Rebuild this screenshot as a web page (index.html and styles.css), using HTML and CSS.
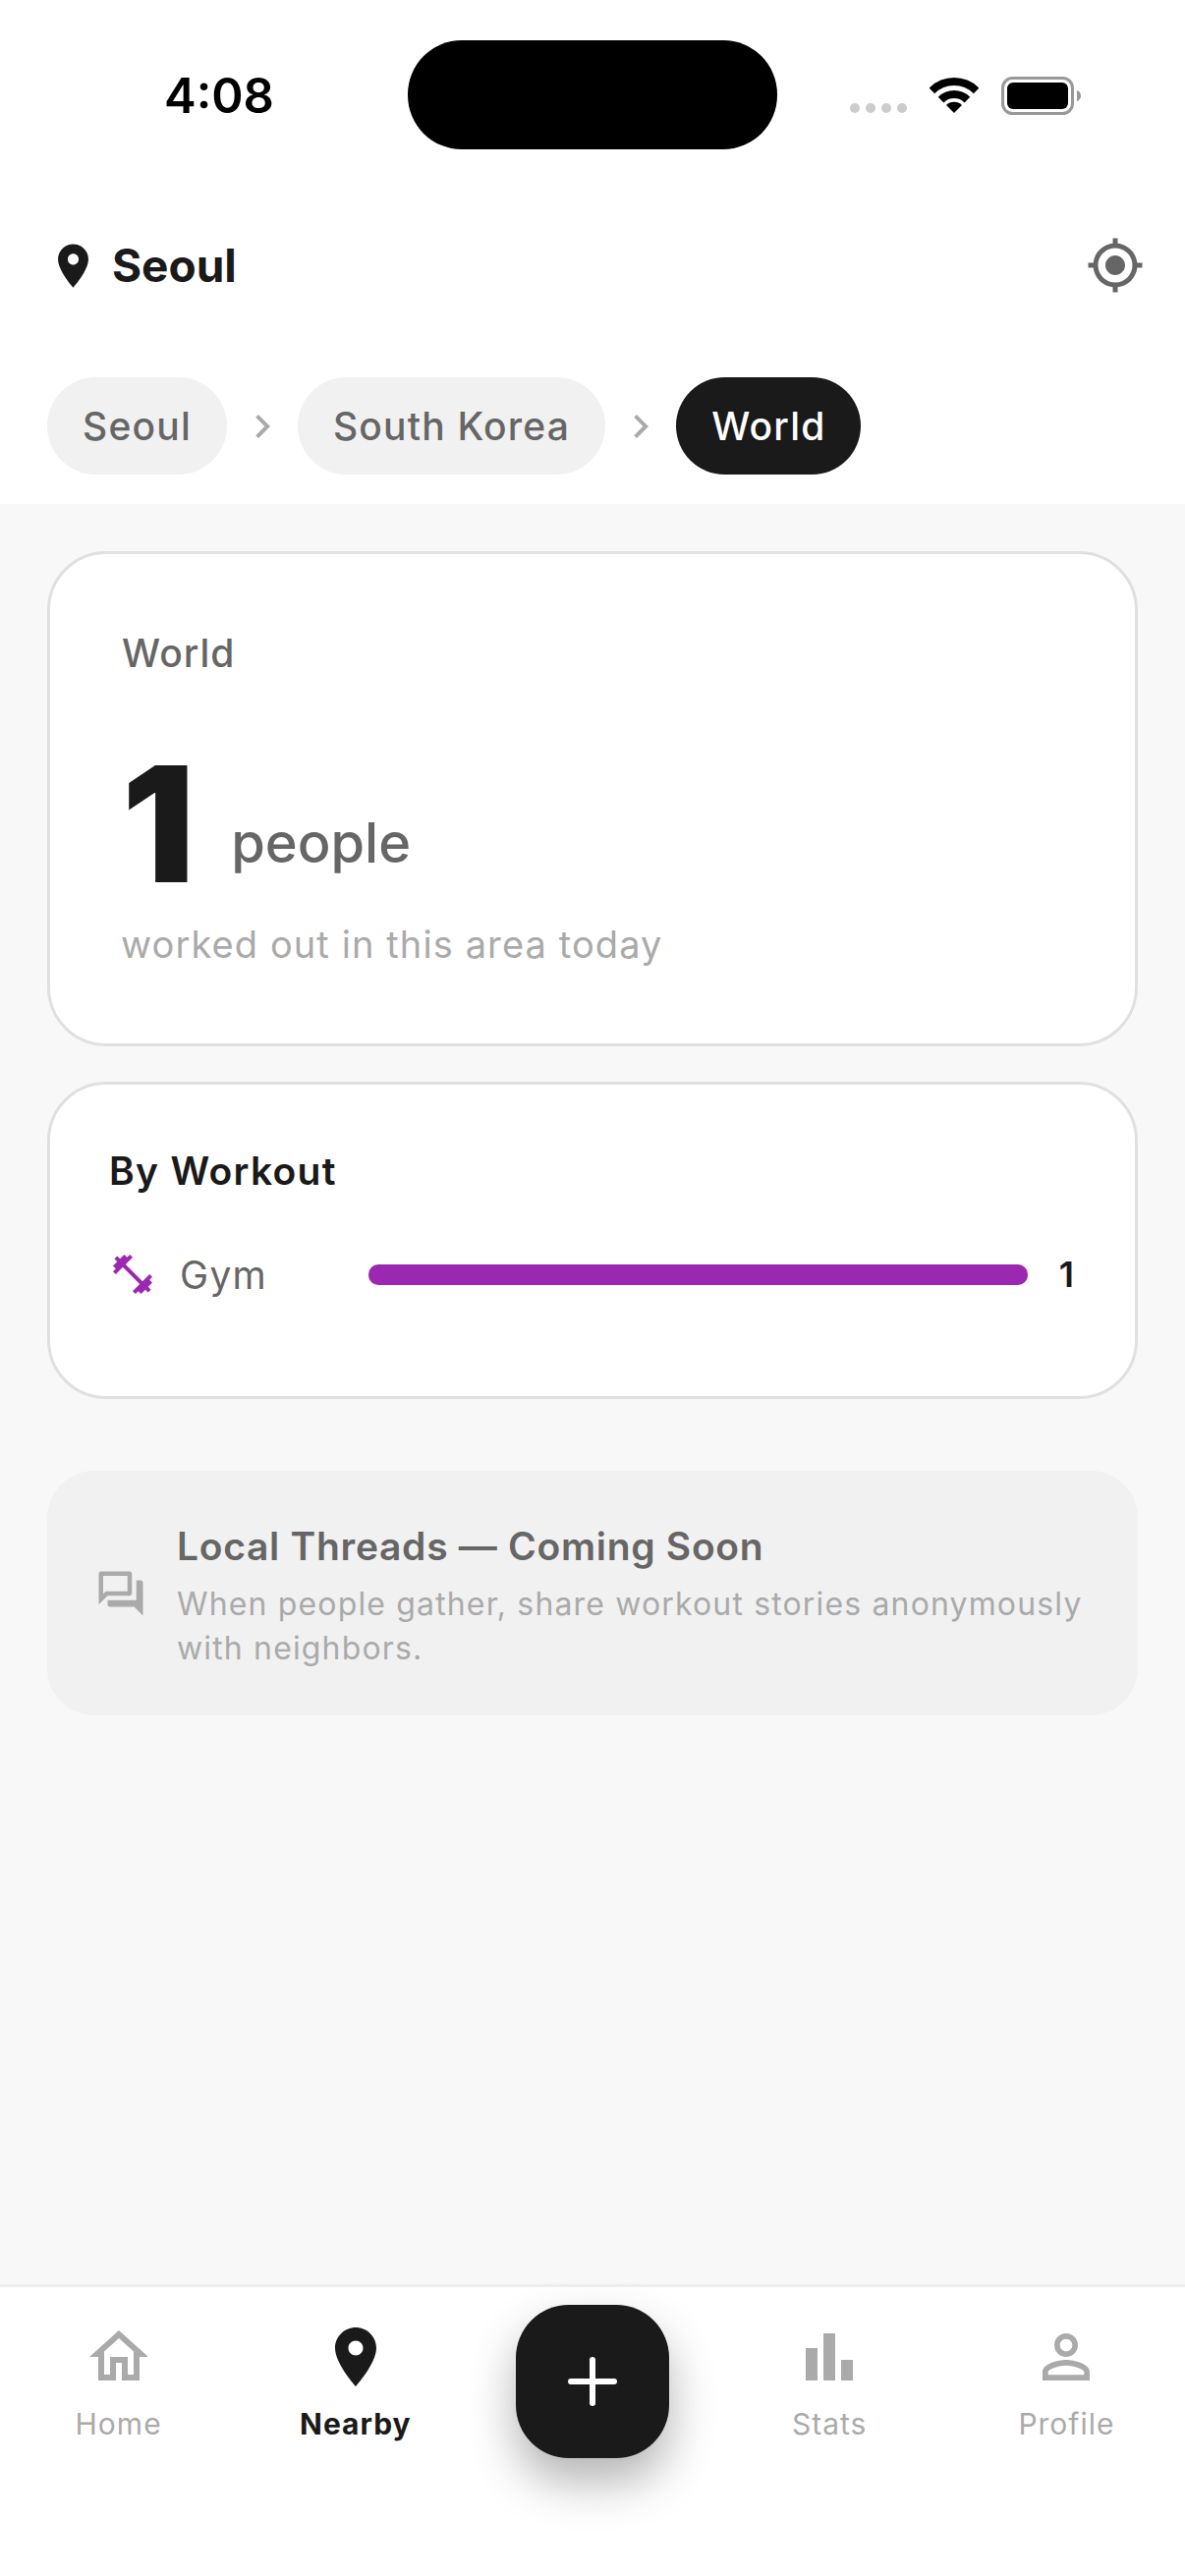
FILE: index.html
```html
<!DOCTYPE html>
<html lang="en">
<head>
    <meta charset="UTF-8">
    <meta name="viewport" content="width=device-width, initial-scale=1.0">
    <title>Nearby</title>
    <link rel="stylesheet" href="styles.css">
</head>
<body>
    <div class="app">
        <div class="top">
            <div class="status-bar">
                <span class="time">4:08</span>
                <div class="island"></div>
                <div class="signal-dots"><i></i><i></i><i></i><i></i></div>
                <svg class="wifi" viewBox="0 0 50 37">
                    <path d="M2.4 14.4A32 32 0 0 1 47.6 14.4" fill="none" stroke="#000" stroke-width="8"/>
                    <path d="M11.6 23.6A19 19 0 0 1 38.4 23.6" fill="none" stroke="#000" stroke-width="8"/>
                    <path d="M25 37L17 29A11.3 11.3 0 0 1 33 29Z"/>
                </svg>
                <svg class="battery" viewBox="0 0 82 39">
                    <rect x="1.5" y="1.5" width="71" height="36" rx="10" fill="none" stroke="#999" stroke-width="3"/>
                    <rect x="6" y="6" width="62" height="27" rx="6"/>
                    <path d="M77 14c2.5.8 4 3 4 5.500s-1.500 4.700-4 5.500z" fill="#999"/>
                </svg>
            </div>
            <div class="location-row">
                <div class="location">
                    <svg class="location-pin" viewBox="0 0 24 24"><path d="M12 2C8.130 2 5 5.130 5 9c0 5.250 7 13 7 13s7-7.750 7-13c0-3.870-3.130-7-7-7zm0 9.500c-1.380 0-2.500-1.120-2.500-2.500s1.120-2.500 2.500-2.500 2.500 1.120 2.500 2.500-1.120 2.500-2.500 2.500z"/></svg>
                    <span class="location-name">Seoul</span>
                </div>
                <svg class="gps" viewBox="0 0 24 24"><path d="M12 8c-2.210 0-4 1.790-4 4s1.790 4 4 4 4-1.790 4-4-1.790-4-4-4zm8.940 3c-.46-4.170-3.770-7.480-7.940-7.940V1h-2v2.060C6.830 3.520 3.520 6.830 3.060 11H1v2h2.060c.46 4.170 3.770 7.480 7.940 7.940V23h2v-2.060c4.170-.46 7.480-3.770 7.940-7.940H23v-2h-2.060zM12 19c-3.870 0-7-3.130-7-7s3.130-7 7-7 7 3.130 7 7-3.130 7-7 7z"/></svg>
            </div>
            <div class="chips">
                <span class="chip">Seoul</span>
                <svg class="chevron" viewBox="0 0 24 24"><path d="M10 6L8.590 7.410 13.170 12l-4.580 4.590L10 18l6-6z"/></svg>
                <span class="chip">South Korea</span>
                <svg class="chevron" viewBox="0 0 24 24"><path d="M10 6L8.590 7.410 13.170 12l-4.580 4.590L10 18l6-6z"/></svg>
                <span class="chip chip-active">World</span>
            </div>
        </div>

        <div class="content">
            <div class="card summary">
                <div class="summary-area">World</div>
                <div class="summary-count">
                    <span class="count-number">1</span>
                    <span class="count-unit">people</span>
                </div>
                <div class="summary-note">worked out in this area today</div>
            </div>

            <div class="card workouts">
                <div class="workouts-title">By Workout</div>
                <div class="workout-row">
                    <svg class="workout-icon" viewBox="0 0 24 24"><path d="M20.570 14.860L22 13.430 20.570 12 17 15.570 8.430 7 12 3.430 10.570 2 9.140 3.430 7.710 2 5.570 4.140 4.140 2.710 2.710 4.140l1.430 1.430L2 7.710l1.430 1.430L2 10.570 3.430 12 7 8.430 15.570 17 12 20.570 13.430 22l1.430-1.430L16.290 22l2.140-2.140 1.430 1.430 1.430-1.430-1.430-1.430L22 16.290z"/></svg>
                    <span class="workout-name">Gym</span>
                    <div class="workout-track"><div class="workout-fill" style="width: 100%"></div></div>
                    <span class="workout-count">1</span>
                </div>
            </div>

            <div class="threads">
                <svg class="threads-icon" viewBox="0 0 24 24"><path d="M15 4v7H5.170l-.59.59-.58.58V4h11m1-2H3c-.55 0-1 .45-1 1v14l4-4h10c.55 0 1-.45 1-1V3c0-.55-.45-1-1-1zm5 4h-2v9H6v2c0 .55.45 1 1 1h11l4 4V7c0-.55-.45-1-1-1z"/></svg>
                <div class="threads-text">
                    <div class="threads-title">Local Threads — Coming Soon</div>
                    <div class="threads-sub">When people gather, share workout stories anonymously with neighbors.</div>
                </div>
            </div>
        </div>

        <nav class="tabbar">
            <div class="tab">
                <svg viewBox="0 0 24 24"><path d="M12 5.690l5 4.500V18h-2v-6H9v6H7v-7.810l5-4.500M12 3L2 12h3v8h6v-6h2v6h6v-8h3L12 3z"/></svg>
                <span>Home</span>
            </div>
            <div class="tab tab-active">
                <svg viewBox="0 0 24 24"><path d="M12 2C8.130 2 5 5.130 5 9c0 5.250 7 13 7 13s7-7.750 7-13c0-3.870-3.130-7-7-7zm0 9.500c-1.380 0-2.500-1.120-2.500-2.500s1.120-2.500 2.500-2.500 2.500 1.120 2.500 2.500-1.120 2.500-2.500 2.500z"/></svg>
                <span>Nearby</span>
            </div>
            <div class="tab-center">
                <div class="fab">
                    <svg viewBox="0 0 50 50"><path d="M25 3v44M3 25h44" fill="none" stroke="#fff" stroke-width="6" stroke-linecap="round"/></svg>
                </div>
            </div>
            <div class="tab">
                <svg viewBox="0 0 24 24"><path d="M4 9h4v11H4zm12 4h4v7h-4zm-6-9h4v16h-4z"/></svg>
                <span>Stats</span>
            </div>
            <div class="tab">
                <svg viewBox="0 0 24 24"><path d="M12 5.900c1.160 0 2.100.94 2.100 2.100s-.94 2.100-2.100 2.100S9.900 9.160 9.900 8s.94-2.100 2.100-2.100m0 9c2.970 0 6.100 1.460 6.100 2.100v1.100H5.900V17c0-.64 3.130-2.100 6.100-2.100M12 4C9.790 4 8 5.790 8 8s1.790 4 4 4 4-1.790 4-4-1.790-4-4-4zm0 9c-2.670 0-8 1.340-8 4v3h16v-3c0-2.660-5.330-4-8-4z"/></svg>
                <span>Profile</span>
            </div>
        </nav>
    </div>
</body>
</html>
```

FILE: styles.css
```css
* {
    box-sizing: border-box;
}
body {
    margin: 0;
    font-family: Inter, "Liberation Sans", sans-serif;
    color: #1a1a1a;
}
.app {
    width: 1206px;
    height: 2622px;
    display: flex;
    flex-direction: column;
    background-color: #f8f8f8;
    overflow: hidden;
}

/* top area */
.top {
    background-color: #fff;
    height: 513px;
    flex-shrink: 0;
}
.status-bar {
    height: 240px;
    display: flex;
    align-items: flex-start;
}
.time {
    width: 248px;
    margin-left: 167px;
    margin-top: 70px;
    font-size: 49px;
    line-height: 56px;
    font-weight: 600;
    color: #000;
}
.island {
    width: 376px;
    height: 111px;
    margin-top: 41px;
    background-color: #000;
    border-radius: 55px;
}
.signal-dots {
    display: flex;
    gap: 6px;
    margin-left: 74px;
    margin-top: 105px;
}
.signal-dots i {
    width: 10px;
    height: 10px;
    border-radius: 5px;
    background-color: #ccc;
}
.wifi {
    width: 50px;
    height: 37px;
    margin-left: 23px;
    margin-top: 78px;
}
.battery {
    width: 82px;
    height: 39px;
    margin-left: 23px;
    margin-top: 78px;
}
.location-row {
    height: 60px;
    display: flex;
    align-items: center;
    justify-content: space-between;
    padding: 0 41px 0 48px;
}
.location {
    display: flex;
    align-items: center;
    gap: 13px;
}
.location-pin {
    width: 53px;
    height: 53px;
    fill: #1a1a1a;
}
.location-name {
    font-size: 46px;
    font-weight: 700;
}
.gps {
    width: 60px;
    height: 60px;
    fill: #666;
}
.chips {
    display: flex;
    align-items: center;
    gap: 12px;
    margin-top: 84px;
    padding-left: 48px;
}
.chip {
    height: 99px;
    display: flex;
    align-items: center;
    padding: 0 36px;
    border-radius: 50px;
    background-color: #f1f1f1;
    color: #666;
    font-size: 39px;
    font-weight: 500;
    letter-spacing: 1.2px;
}
.chip-active {
    background-color: #1a1a1a;
    color: #fff;
}
.chevron {
    width: 48px;
    height: 48px;
    fill: #aaa;
}

/* cards */
.content {
    flex: 1;
    padding: 48px 48px 0;
}
.card {
    background-color: #fff;
    border: 3px solid #e0e0e0;
    border-radius: 60px;
}
.summary {
    height: 504px;
    padding: 76px 73px 0;
}
.summary-area {
    font-size: 39px;
    line-height: 50px;
    font-weight: 500;
    color: #666;
    letter-spacing: 1px;
}
.summary-count {
    display: flex;
    align-items: flex-end;
    gap: 37px;
    margin-top: 67px;
}
.count-number {
    font-size: 164px;
    line-height: 164px;
    font-weight: 900;
}
.count-unit {
    font-size: 56px;
    line-height: 68px;
    font-weight: 500;
    color: #666;
    margin-bottom: 29px;
}
.summary-note {
    margin-top: 15px;
    font-size: 38px;
    line-height: 50px;
    color: #aaa;
    letter-spacing: 1.1px;
    margin-left: -1px;
}
.workouts {
    height: 323px;
    margin-top: 36px;
    padding: 63px 60px 0;
}
.workouts-title {
    font-size: 39px;
    line-height: 50px;
    font-weight: 600;
    letter-spacing: 1.3px;
}
.workout-row {
    display: flex;
    align-items: center;
    margin-top: 56px;
}
.workout-icon {
    width: 48px;
    height: 48px;
    fill: #9c27b0;
    margin-right: 24px;
}
.workout-name {
    width: 192px;
    font-size: 39px;
    color: #666;
    letter-spacing: 1.3px;
}
.workout-track {
    flex: 1;
    height: 21px;
    border-radius: 10px;
    background-color: #f1f1f1;
}
.workout-fill {
    height: 100%;
    border-radius: 10px;
    background-color: #9c27b0;
}
.workout-count {
    width: 47px;
    margin-right: 2px;
    text-align: right;
    font-size: 36px;
    font-weight: 600;
}
.threads {
    height: 249px;
    margin-top: 73px;
    display: flex;
    align-items: center;
    gap: 30px;
    padding: 5px 48px 0;
    background-color: #f1f1f1;
    border-radius: 48px;
}
.threads-icon {
    width: 54px;
    height: 54px;
    flex-shrink: 0;
    margin-top: -5px;
    fill: #aaa;
}
.threads-title {
    font-size: 39px;
    line-height: 50px;
    font-weight: 600;
    color: #666;
    letter-spacing: 0.7px;
}
.threads-sub {
    margin-top: 11px;
    font-size: 32px;
    line-height: 45px;
    color: #aaa;
    letter-spacing: 1.15px;
}

/* bottom bar */
.tabbar {
    height: 297px;
    flex-shrink: 0;
    display: flex;
    align-items: flex-start;
    background-color: #fff;
    border-top: 3px solid #eee;
    padding-top: 35px;
}
.tab,
.tab-center {
    flex: 1;
    display: flex;
    flex-direction: column;
    align-items: center;
}
.tab svg {
    width: 72px;
    height: 72px;
    fill: #aaa;
}
.tab span {
    margin-top: 14px;
    font-size: 30px;
    line-height: 36px;
    color: #aaa;
    letter-spacing: 1px;
}
.tab-active svg {
    fill: #1a1a1a;
}
.tab-active span {
    font-weight: 700;
    color: #1a1a1a;
}
.tab-center {
    margin-top: -17px;
}
.fab {
    width: 156px;
    height: 156px;
    display: flex;
    align-items: center;
    justify-content: center;
    background-color: #1a1a1a;
    border-radius: 54px;
    box-shadow: 0 24px 48px rgba(0, 0, 0, 0.3);
}
.fab svg {
    width: 50px;
    height: 50px;
}
```
